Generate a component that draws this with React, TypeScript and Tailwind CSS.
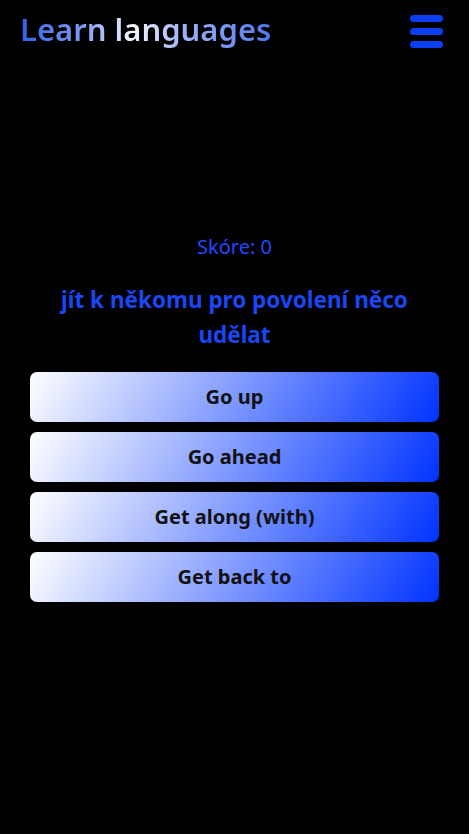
const answers = ['Go up', 'Go ahead', 'Get along (with)', 'Get back to'];

export default function App() {
    return (
        <div className="min-h-[834px] bg-black font-['Noto_Sans',sans-serif]">
            <header className="h-[62px] flex items-center justify-between pl-[20px] pr-[26px]">
                <h1 className="text-[31px] font-semibold leading-none bg-[linear-gradient(90deg,#3361ec_0%,#7f9af2_25%,#f4f6ff_45%,#9fb3f5_65%,#4f76ee_100%)] bg-clip-text text-transparent pb-[3px]">
                    Learn languages
                </h1>
                <button className="flex flex-col gap-[6px] w-[33px]" aria-label="menu">
                    <span className="block h-[7px] rounded-full bg-[#0b3ef5]" />
                    <span className="block h-[7px] rounded-full bg-[#0b3ef5]" />
                    <span className="block h-[7px] rounded-full bg-[#0b3ef5]" />
                </button>
            </header>

            <main className="pt-[173px] px-[30px] flex flex-col items-center">
                <p className="text-[20px] leading-[24px] text-[#1f49ff]">Skóre: 0</p>
                <h2 className="mt-[23px] text-[22.5px] leading-[35px] font-bold text-[#1a47f5] text-center px-[10px]">
                    jít k někomu pro povolení něco udělat
                </h2>
                <div className="mt-[20px] w-full flex flex-col gap-[10px]">
                    {answers.map(a => (
                        <button
                            key={a}
                            className="h-[50px] w-full rounded-[7px] bg-[linear-gradient(120deg,#ffffff,#0033ff)] text-[20px] font-bold text-[#111]"
                        >
                            {a}
                        </button>
                    ))}
                </div>
            </main>
        </div>
    );
}
